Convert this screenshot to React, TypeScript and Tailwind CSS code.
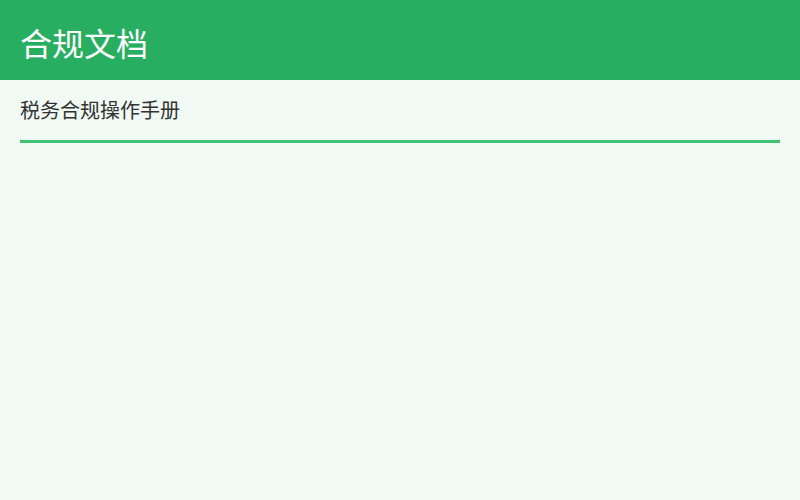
import React from 'react';

const App: React.FC = () => {
  return (
    <div
      className="min-h-[500px] w-full bg-[#f0f9f4]"
      style={{ fontFamily: '"Noto Sans", "Noto Sans CJK SC", sans-serif' }}
    >
      {/* Header */}
      <header className="flex h-20 items-center bg-[#27ae60] px-5 pt-2">
        <h1 className="text-[32px] font-normal leading-none text-white">合规文档</h1>
      </header>

      {/* Content */}
      <div className="px-5 pt-4">
        <div className="border-b-[3px] border-[#3ec374] pb-[14px] text-[20px] leading-[30px] text-[#333333]">
          税务合规操作手册
        </div>
      </div>
    </div>
  );
};

export default App;
